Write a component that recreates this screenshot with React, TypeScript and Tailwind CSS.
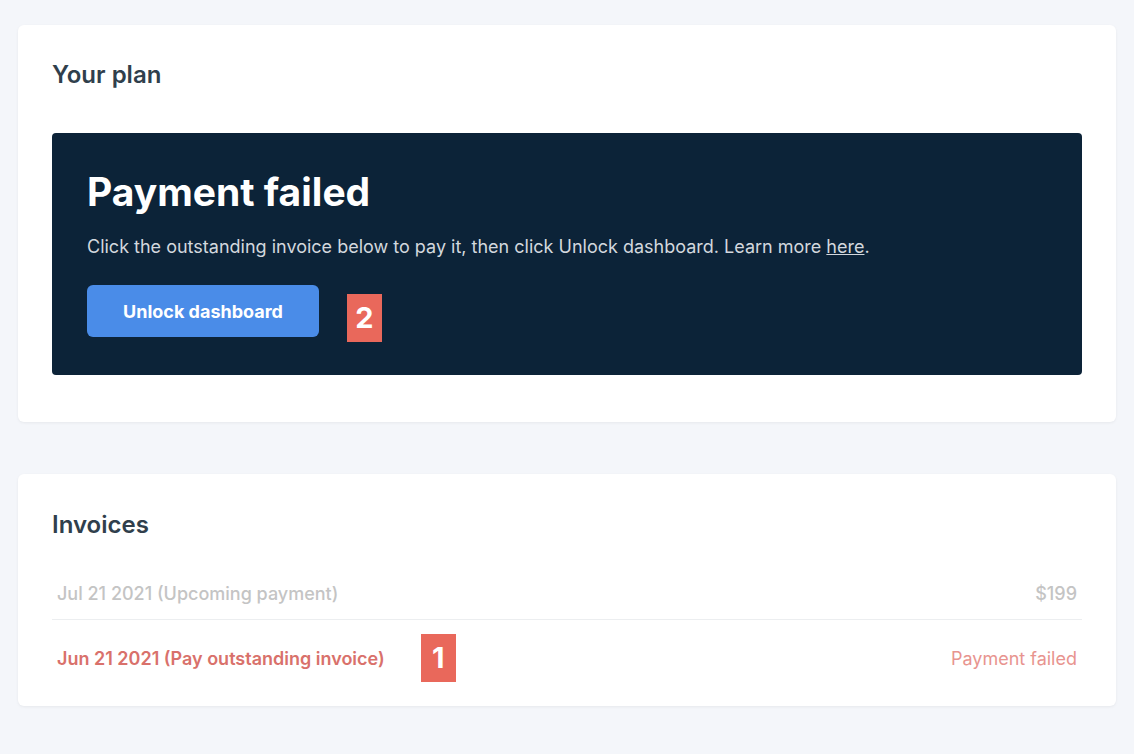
import React from 'react';

function Badge({ n }: { n: string }) {
  return (
    <span className="flex h-[48px] w-[35px] items-center justify-center bg-[#e9685b] text-[29px] font-bold text-white">
      {n}
    </span>
  );
}

export default function App() {
  return (
    <div
      className="min-h-[754px] bg-[#f4f6fa] px-[18px] pt-[25px] pb-6"
      style={{ fontFamily: 'Inter, "Noto Sans", sans-serif' }}
    >
      {/* Plan card */}
      <section className="rounded-md bg-white px-[34px] pt-[60px] pb-[47px] shadow-[0_1px_3px_rgba(0,0,0,0.06)]">
        <h2 className="text-[24px] leading-none font-semibold text-[#303f4c] -mt-[22px]">Your plan</h2>
        <div className="mt-[46px] rounded bg-[#0c2338] px-[35px] pt-[36px] pb-[33px]">
          <h1 className="text-[39px] leading-[46px] font-bold text-white">Payment failed</h1>
          <p className="mt-[19px] text-[18px] leading-[26px] text-[#d3d8de]">
            Click the outstanding invoice below to pay it, then click Unlock dashboard. Learn more{' '}
            <a className="underline">here</a>.
          </p>
          <div className="mt-[20px] flex items-center gap-[28px]">
            <button className="h-[52px] w-[232px] rounded-md bg-[#4a8ce8] text-[18px] font-bold text-white">
              Unlock dashboard
            </button>
            <div className="mt-[14px]">
              <Badge n="2" />
            </div>
          </div>
        </div>
      </section>

      {/* Invoices card */}
      <section className="mt-[52px] rounded-md bg-white px-[34px] pt-[36px] pb-[10px] shadow-[0_1px_3px_rgba(0,0,0,0.06)]">
        <h2 className="text-[24px] leading-[30px] font-semibold text-[#303f4c]">Invoices</h2>
        <div className="mt-[28px]">
          <div className="flex h-[52px] items-center justify-between border-b border-[#eceef0] px-[5px] text-[18px] font-medium text-[#c4c4c4]">
            <span>Jul 21 2021 (Upcoming payment)</span>
            <span>$199</span>
          </div>
          <div className="flex h-[76px] items-center justify-between px-[5px] text-[18px]">
            <div className="flex items-center gap-[36px]">
              <span className="font-semibold text-[#d9716b]">Jun 21 2021 (Pay outstanding invoice)</span>
              <Badge n="1" />
            </div>
            <span className="text-[#e8948f]">Payment failed</span>
          </div>
        </div>
      </section>
    </div>
  );
}
